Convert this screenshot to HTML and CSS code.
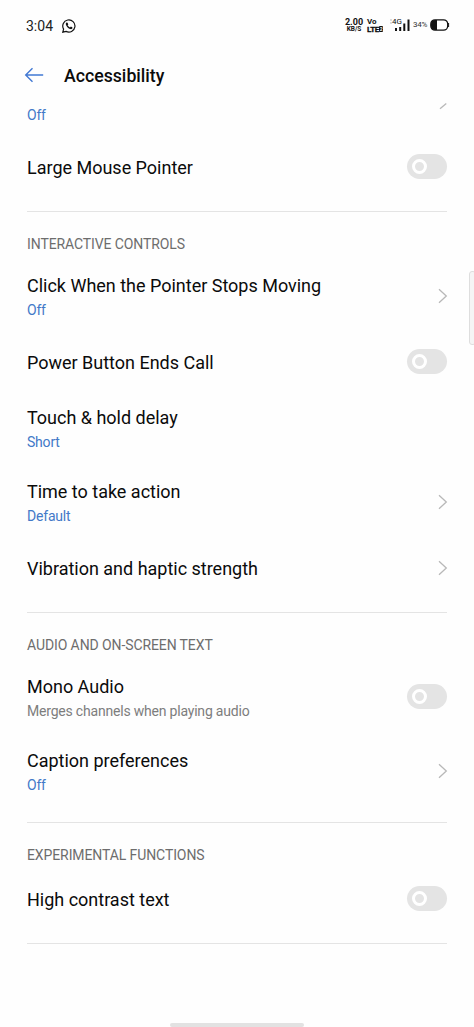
FILE: index.html
```
<!DOCTYPE html>
<html lang="en">
<head>
<meta charset="utf-8">
<title>Accessibility</title>
<link rel="stylesheet" href="styles.css">
</head>
<body>
<svg class="defs" width="0" height="0"><defs>
<symbol id="chevron" viewBox="0 0 10 16"><path d="M1 1.2 8.3 8 1 14.8" fill="none" stroke="#b8b8b8" stroke-width="1.3"/></symbol>
</defs></svg>
<header class="status">
  <span class="time">3:04</span>
  <svg class="whatsapp" viewBox="0 0 14 14"><path d="M.8 13.2 1.6 10.1A6.1 6.1 0 1 1 4 12.4Z" fill="none" stroke="#111" stroke-width="1.2"/><path d="M4.5 3.6c-.9.6-.9 1.8-.1 3.1 1 1.8 2.4 3 4.1 3.4 1.1.2 2-.5 2-1.6L8.9 7.6 8 8.5C6.900 8 6.100 7.200 5.600 6.200l.7-.8-.7-1.700Z" fill="#111"/></svg>
  <div class="indicators">
    <div class="stack speed"><b>2.00</b><b class="small">KB/S</b></div>
    <div class="stack volte"><b>Vo</b><b class="lte">LTE<i class="sim">2</i></b></div>
    <div class="signal"><span class="network">4G</span>
      <svg class="bars" viewBox="0 0 20 14"><path d="M0 2h2M0 5h2" stroke="#bbb" stroke-width="1"/><path d="M6 13v-3M10.200 13V9M14.300 13V5.500M18.500 13V1.500" stroke="#111" stroke-width="2"/></svg>
    </div>
    <span class="percent">34%</span>
    <svg class="battery" viewBox="0 0 20 12"><rect x=".8" y=".8" width="16.900" height="10.400" rx="4.200" fill="#fff" stroke="#111" stroke-width="1.300"/><path d="M7 1v10H5Q1 11 1 7V5Q1 1 5 1Z" fill="#111"/><path d="M18.600 4v4" stroke="#111" stroke-width="1"/></svg>
  </div>
</header>
<div class="appbar">
  <svg class="back" viewBox="0 0 20 16"><path d="M19.200 8H1.800M8.500 1.200 1.700 8 8.500 14.800" fill="none" stroke="#4279d3" stroke-width="1.400"/></svg>
  <h1>Accessibility</h1>
</div>
<main class="list">
  <div class="row clipped"><p class="value">Off</p><svg class="chevron tail" viewBox="0 0 10 16"><path d="M2 14.800 8.300 9.500" stroke="#b8b8b8" stroke-width="1.300"/></svg></div>
  <div class="row single"><h2>Large Mouse Pointer</h2><span class="switch"></span></div>
  <section>
    <h3>INTERACTIVE CONTROLS</h3>
    <div class="row"><div><h2>Click When the Pointer Stops Moving</h2><p class="value">Off</p></div><svg class="chevron"><use href="#chevron"/></svg></div>
    <div class="row single power"><h2>Power Button Ends Call</h2><span class="switch"></span></div>
    <div class="row"><div><h2>Touch &amp; hold delay</h2><p class="value">Short</p></div></div>
    <div class="row"><div><h2>Time to take action</h2><p class="value">Default</p></div><svg class="chevron"><use href="#chevron"/></svg></div>
    <div class="row single"><h2>Vibration and haptic strength</h2><svg class="chevron"><use href="#chevron"/></svg></div>
  </section>
  <section>
    <h3>AUDIO AND ON-SCREEN TEXT</h3>
    <div class="row"><div><h2>Mono Audio</h2><p class="note">Merges channels when playing audio</p></div><span class="switch"></span></div>
    <div class="row last"><div><h2>Caption preferences</h2><p class="value">Off</p></div><svg class="chevron"><use href="#chevron"/></svg></div>
  </section>
  <section>
    <h3>EXPERIMENTAL FUNCTIONS</h3>
    <div class="row single"><h2>High contrast text</h2><span class="switch"></span></div>
  </section>
  <hr>
</main>
<div class="edge"></div>
<div class="homebar"></div>
</body>
</html>
```
FILE: styles.css
```
*, *::before { box-sizing: border-box; }
body { margin: 0; width: 474px; height: 1027px; position: relative; overflow: hidden; background: #fefefe; color: #0b0b0b; font-family: Roboto, sans-serif; display: flex; flex-direction: column; }
h1, h2, h3, p { margin: 0; white-space: nowrap; }
.defs { position: absolute; }
.status { height: 50px; padding: 1px 24px 0 26px; display: flex; align-items: center; flex: none; }
.time { font-size: 14px; color: #222; width: 36px; }
.whatsapp { width: 14px; height: 14px; }
.indicators { margin-left: auto; display: flex; align-items: center; color: #111; }
.stack { display: flex; flex-direction: column; height: 15px; font-size: 8px; line-height: 8px; }
.speed { width: 18px; margin-right: 4px; align-items: center; white-space: nowrap; }
.speed b:first-child { font-size: 9px; }
.speed .small { font-size: 6.5px; line-height: 7px; }
.volte { width: 23px; }
.lte { display: flex; font-size: 8px; line-height: 7px; letter-spacing: -.3px; -webkit-text-stroke: .3px #111; }
.sim { background: #111; color: #fff; font-size: 5px; font-style: normal; width: 4px; height: 6px; line-height: 6px; text-align: center; border-radius: 1px; -webkit-text-stroke: 0; }
.signal { display: grid; width: 20px; height: 14px; margin: -2px 3px 0 0; }
.network, .bars { grid-area: 1 / 1; }
.network { font-size: 8px; line-height: 7px; padding-left: 2px; }
.bars { width: 20px; height: 14px; }
.percent { font-size: 8px; letter-spacing: -.2px; width: 17px; margin-top: -2px; color: #333; }
.battery { width: 20px; height: 12px; margin-top: -2px; }
.appbar { height: 50px; padding: 1px 0 0 24px; display: flex; align-items: center; gap: 20px; flex: none; }
.back { width: 20px; height: 16px; margin-top: -1px; }
h1 { font-size: 17.7px; font-weight: 500; line-height: 24px; }
.list { padding: 0 27px; }
.row { height: 74px; display: flex; justify-content: space-between; padding-top: 12.500px; }
h2 { font-size: 18px; line-height: 24px; font-weight: 400; letter-spacing: -.01px; }
p { font-size: 14px; letter-spacing: -.2px; line-height: 20px; margin-top: 2.500px; }
.value { color: #4279c8; }
.note { color: #7d7d7d; }
.single { height: 57px; padding-top: 15.500px; }
.power { height: 58px; }
.clipped { height: 40px; padding-top: 2.500px; }
.last { height: 72px; }
.chevron { width: 10px; height: 16px; flex: none; margin: 14.500px -1px 0 0; }
.single .chevron { margin-top: 3px; }
.clipped .tail { margin-top: -9px; }
.switch { width: 40px; height: 25px; border-radius: 13px; background: #e4e4e4; padding: 5px 4.500px; margin-top: 9.500px; flex: none; }
.single .switch { margin-top: -1.500px; }
.switch::before { content: ""; display: block; width: 15px; height: 15px; border: 3.500px solid #fff; border-radius: 50%; }
section { margin-top: 14px; border-top: 1px solid #e4e4e4; padding-top: 22px; }
h3 { font-size: 14px; line-height: 20px; height: 27px; font-weight: 400; color: #6d6d6d; letter-spacing: -.1px; }
hr { border: 0; border-top: 1px solid #e4e4e4; margin: 14px 0 0; }
.edge { position: absolute; right: -2px; top: 271px; width: 7px; height: 74px; border: 1px solid #dedede; border-radius: 3px; background: #f5f5f5; }
.homebar { position: absolute; left: 170px; top: 1023px; width: 134px; height: 4px; background: #e2e2e2; border-radius: 2px; }
```
